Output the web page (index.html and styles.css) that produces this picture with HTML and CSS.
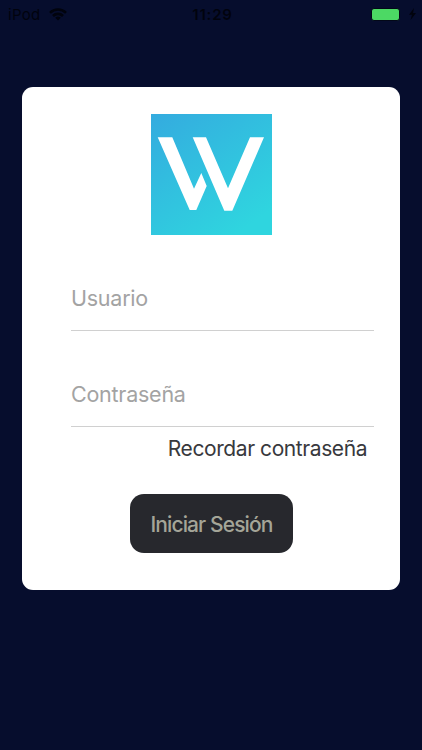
FILE: index.html
```html
<!DOCTYPE html>
<html lang="es">
<head>
    <meta charset="UTF-8">
    <meta name="viewport" content="width=device-width, initial-scale=1.0">
    <title>Iniciar Sesión</title>
    <link rel="stylesheet" href="styles.css">
</head>
<body>
<header class="status">
    <div class="carrier">
        <span>iPod</span>
        <svg width="18" height="13" viewBox="0 0 18 13" fill="none" stroke="#01030d" stroke-width="2.6">
            <path d="M1 4.8a11.3 11.3 0 0 1 16 0"/>
            <path d="M4 8a7 7 0 0 1 10 0"/>
            <path d="M9 12.6L6.2 9.8a4 4 0 0 1 5.6 0z" fill="#01030d" stroke="none"/>
        </svg>
    </div>
    <span class="time">11:29</span>
    <div class="power">
        <div class="battery"></div>
        <svg width="9" height="12" viewBox="0 0 9 12" fill="#01030d">
            <path d="M6 0L1 6.8h3L2.6 12 8 4.9H5z"/>
        </svg>
    </div>
</header>

<form class="card">
    <svg class="logo" width="121" height="121" viewBox="0 0 121 121">
        <defs>
            <linearGradient id="sky" x1="0" y1="0" x2="0.7" y2="1">
                <stop offset="0" stop-color="#34abdf"/>
                <stop offset="1" stop-color="#2fd5df"/>
            </linearGradient>
        </defs>
        <rect width="121" height="121" fill="url(#sky)"/>
        <path fill="#fff" d="M6.7 23.3H21.3L43 74.7 50.3 59 55.7 72 45.3 96H38.7z"/>
        <path fill="#fff" d="M41.7 23.3H55L77 74.3 99 23.3H113L81.3 96.7H73.3z"/>
    </svg>
    <input class="field" type="text" placeholder="Usuario">
    <input class="field" type="password" placeholder="Contraseña">
    <a class="remember">Recordar contraseña</a>
    <button class="login" type="button">Iniciar Sesión</button>
</form>
</body>
</html>
```

FILE: styles.css
```css
* {
    box-sizing: border-box;
}

body {
    margin: 0;
    min-height: 100vh;
    background: #060d2d;
    font-family: Inter, "Liberation Sans", sans-serif;
}

.status {
    display: grid;
    grid-template-columns: 1fr auto 1fr;
    align-items: center;
    height: 28px;
    padding: 0 5px 0 8px;
    color: #01030d;
    font-size: 15px;
}

.carrier {
    display: flex;
    align-items: center;
    gap: 8px;
    letter-spacing: 0.3px;
}

.time {
    font-weight: 600;
    letter-spacing: 0.8px;
}

.power {
    display: flex;
    align-items: center;
    justify-content: flex-end;
    gap: 8px;
}

.battery {
    width: 29px;
    height: 13px;
    border: 1px solid #030818;
    border-radius: 3px;
    background: #4cd964;
}

.card {
    display: flex;
    flex-direction: column;
    width: 378px;
    height: 503px;
    margin: 59px 0 0 22px;
    padding: 27px 26px 36px 49px;
    border-radius: 11px;
    background: #fff;
}

.logo {
    flex: none;
    margin-left: 80px;
}

.field {
    flex: none;
    height: 62px;
    margin-top: 34px;
    padding: 0 0 4px;
    border: 0;
    border-bottom: 1px solid #d0d0d0;
    border-radius: 0;
    outline: none;
    background: none;
    color: #333;
    font-family: inherit;
    font-size: 21.5px;
    letter-spacing: -0.25px;
}

.field::placeholder {
    color: #a3a3a3;
    opacity: 1;
}

.remember {
    align-self: flex-end;
    margin: 8px 7px 0 0;
    color: #38393d;
    font-size: 21px;
    line-height: 28px;
    letter-spacing: -0.42px;
}

.login {
    flex: none;
    width: 163px;
    height: 59px;
    margin: 31px 0 0 59px;
    padding: 1px 0 0;
    border: 0;
    border-radius: 14px;
    background: #27282d;
    color: #a4a598;
    font-family: inherit;
    font-size: 21px;
    font-weight: 500;
    letter-spacing: -0.9px;
    white-space: nowrap;
}
```
